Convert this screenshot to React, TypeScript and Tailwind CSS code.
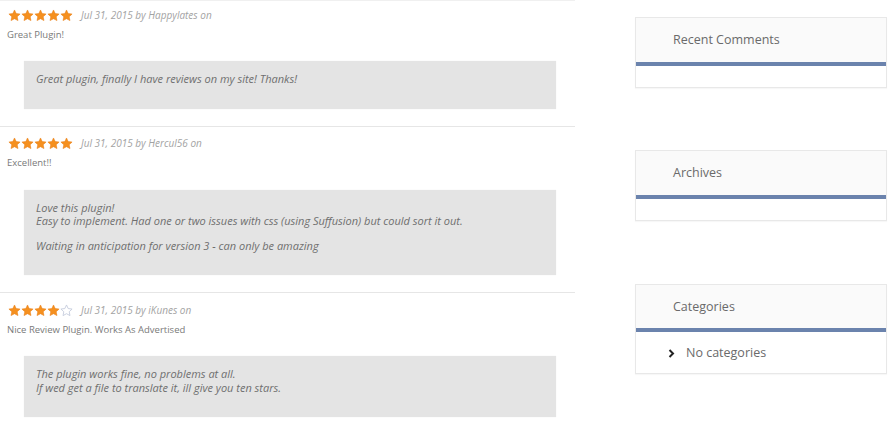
import React from 'react';

interface Review {
  rating: number;
  date: string;
  author: string;
  title: string;
  lines: string[];
}

const reviews: Review[] = [
  {
    rating: 5,
    date: 'Jul 31, 2015',
    author: 'Happylates',
    title: 'Great Plugin!',
    lines: ['Great plugin, finally I have reviews on my site! Thanks!'],
  },
  {
    rating: 5,
    date: 'Jul 31, 2015',
    author: 'Hercul56',
    title: 'Excellent!!',
    lines: [
      'Love this plugin!',
      'Easy to implement. Had one or two issues with css (using Suffusion) but could sort it out.',
      '',
      'Waiting in anticipation for version 3 - can only be amazing',
    ],
  },
  {
    rating: 4,
    date: 'Jul 31, 2015',
    author: 'iKunes',
    title: 'Nice Review Plugin. Works As Advertised',
    lines: [
      'The plugin works fine, no problems at all.',
      'If wed get a file to translate it, ill give you ten stars.',
    ],
  },
];

const STAR = 'M12 1.8l3.1 6.6 7.2.9-5.3 5 1.4 7.1L12 17.9l-6.4 3.5 1.4-7.1-5.3-5 7.2-.9z';

function Star({ filled }: { filled: boolean }) {
  return (
    <svg width="13" height="13" viewBox="0 0 24 24" className="shrink-0">
      {filled ? (
        <path d={STAR} fill="#f5901f" stroke="#e97d12" strokeWidth="1" strokeLinejoin="round" />
      ) : (
        <path d={STAR} fill="none" stroke="#c3cadb" strokeWidth="1.6" strokeLinejoin="round" />
      )}
    </svg>
  );
}

function ReviewItem({ review, first }: { review: Review; first: boolean }) {
  return (
    <div className={first ? 'border-t border-[#f0f0f0] pt-[6px]' : 'border-t border-[#e6e6e6] pt-[9px]'}>
      <div className="flex h-[16px] items-center pl-[8px]">
        <div className="flex">
          {[0, 1, 2, 3, 4].map((i) => (
            <Star key={i} filled={i < review.rating} />
          ))}
        </div>
        <span className="ml-[8px] text-[10px] italic text-[#a3a3a3]">
          {review.date} by {review.author} on
        </span>
      </div>
      <div className="mt-[4px] flex h-[16px] items-center pl-[7px] text-[9.5px] text-[#7a7a7a]">
        {review.title}
      </div>
      <div className="mb-[17px] ml-[24px] mr-[19px] mt-[18px] bg-[#e4e4e4] pb-[23px] pl-[12px] pt-[11px] text-[11px] italic leading-[13.5px] text-[#6f6f6f] shadow-[0_0_1px_rgba(0,0,0,0.08)]">
        {review.lines.map((l, i) =>
          l ? (
            <p key={i} className="whitespace-nowrap">
              {l}
            </p>
          ) : (
            <div key={i} className="h-[11px]" />
          ),
        )}
      </div>
    </div>
  );
}

function Widget({ title, headerH, children }: { title: string; headerH: string; children?: React.ReactNode }) {
  return (
    <div className="border border-[#e8e8e8] bg-white shadow-[0_1px_1px_rgba(0,0,0,0.03)]">
      <div className={`flex items-center bg-[#fafafa] pl-[37px] pt-[1px] text-[12.5px] text-[#6a6a6a] ${headerH}`}>
        {title}
      </div>
      <div className="h-[4px] bg-[#6b83ad]" />
      {children}
    </div>
  );
}

export default function App() {
  return (
    <div
      className="flex h-[426px] w-[896px] overflow-hidden bg-white"
      style={{ fontFamily: '"Open Sans", "Liberation Sans", sans-serif' }}
    >
      <div className="w-[575px] shrink-0">
        {reviews.map((r, i) => (
          <ReviewItem key={i} review={r} first={i === 0} />
        ))}
      </div>

      <div className="ml-[60px] mt-[17px] flex w-[252px] flex-col">
        <Widget title="Recent Comments" headerH="h-[44px]">
          <div className="h-[21px]" />
        </Widget>
        <div className="mt-[62px]">
          <Widget title="Archives" headerH="h-[44px]">
            <div className="h-[21px]" />
          </Widget>
        </div>
        <div className="mt-[63px]">
          <Widget title="Categories" headerH="h-[43px]">
            <div className="flex h-[41px] items-center pl-[32px] pt-[1px] text-[12.5px] text-[#6a6a6a]">
              <svg width="7" height="9" viewBox="0 0 7 9" className="mr-[11px]">
                <path d="M1.5 1l3.5 3.5L1.5 8" fill="none" stroke="#222" strokeWidth="2" />
              </svg>
              No categories
            </div>
          </Widget>
        </div>
      </div>
    </div>
  );
}
